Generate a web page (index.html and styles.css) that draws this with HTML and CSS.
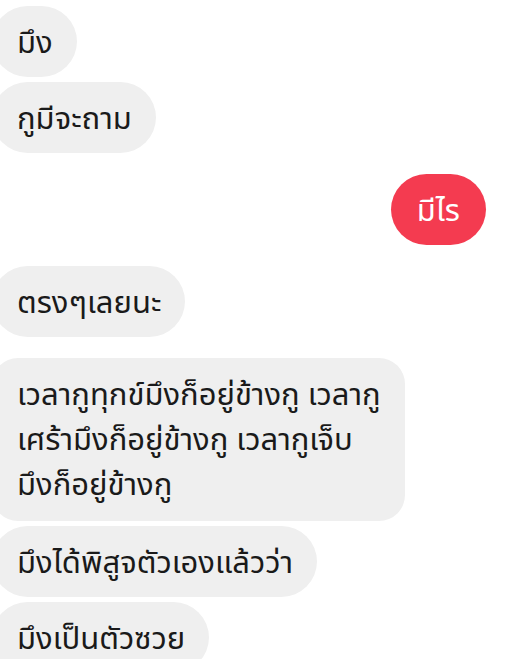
FILE: index.html
```html
<!DOCTYPE html>
<html lang="th">
<head>
    <meta charset="UTF-8">
    <meta name="viewport" content="width=device-width, initial-scale=1.0">
    <title>Chat</title>
    <link rel="stylesheet" href="styles.css">
</head>
<body>
    <div class="chat">
        <div class="group">
            <div class="bubble them">มึง</div>
            <div class="bubble them">กูมีจะถาม</div>
        </div>
        <div class="group">
            <div class="bubble me">มีไร</div>
        </div>
        <div class="group">
            <div class="bubble them">ตรงๆเลยนะ</div>
        </div>
        <div class="group">
            <div class="bubble them wide">เวลากูทุกข์มึงก็อยู่ข้างกู เวลากู<br>เศร้ามึงก็อยู่ข้างกู เวลากูเจ็บ<br>มึงก็อยู่ข้างกู</div>
            <div class="bubble them">มึงได้พิสูจตัวเองแล้วว่า</div>
            <div class="bubble them">มึงเป็นตัวซวย</div>
        </div>
    </div>
</body>
</html>
```

FILE: styles.css
```css
body {
    margin: 0;
    background: #fff;
    font-family: "Noto Sans", "Noto Sans Thai", "Liberation Sans", sans-serif;
    overflow: hidden;
}
.chat {
    display: flex;
    flex-direction: column;
    gap: 21px;
    padding-top: 6px;
}
.group {
    display: flex;
    flex-direction: column;
    align-items: flex-start;
    gap: 5px;
}
.bubble {
    font-size: 31px;
    line-height: 45px;
    padding: 13px 24px 13px 25px;
    border-radius: 36px;
    color: #1a1a1a;
    background: #efefef;
    white-space: nowrap;
}
.them {
    margin-left: -8px;
}
.wide {
    padding-bottom: 15px;
    border-radius: 26px;
}
.me {
    align-self: flex-end;
    margin-right: 31px;
    padding: 13px 26px 13px 26px;
    background: #f43b50;
    color: #fff;
}
```
